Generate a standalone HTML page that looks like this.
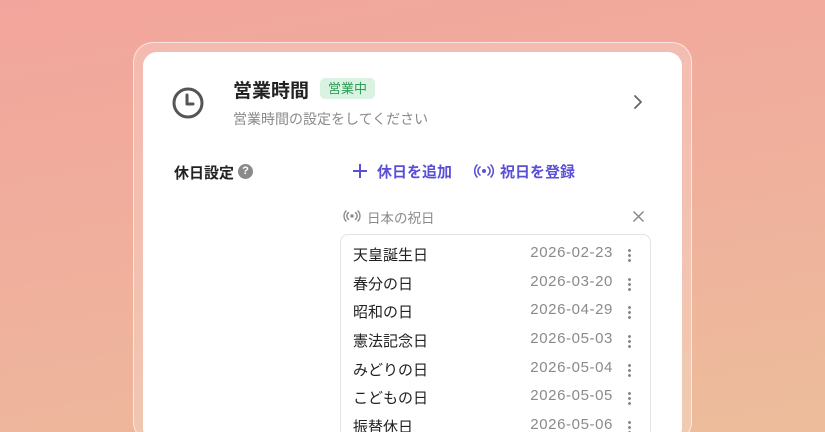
<!DOCTYPE html>
<html><head><meta charset="utf-8"><style>
*{margin:0;padding:0;box-sizing:border-box}
html,body{width:825px;height:432px;overflow:hidden}
body{position:relative;font-family:"Liberation Sans","Noto Sans CJK JP",sans-serif;
background:linear-gradient(170deg,#f2a59c 0%,#f0ae9c 45%,#ecbd9b 100%);}
.frame{position:absolute;left:133px;top:42px;width:559px;height:400px;border-radius:20px;background:rgba(255,255,255,0.22);border:1px solid rgba(255,255,255,0.6)}
.card{position:absolute;left:143px;top:52px;width:539px;height:390px;border-radius:14px;background:#fff}
.abs{position:absolute}
.title{left:233px;top:76px;font-size:19px;font-weight:bold;color:#222}
.badge{left:320px;top:78px;height:21px;padding:0 8px;background:#d9f2e1;color:#2e9e56;font-size:13px;line-height:21px;border-radius:5px}
.sub{left:233px;top:109px;font-size:14px;color:#8a8a8a}
.lbl{left:174px;top:162px;font-size:15px;font-weight:bold;color:#222}
.q{left:238px;top:164px;width:15px;height:15px;border-radius:50%;background:#8a8a8a;color:#fff;font-size:11px;font-weight:bold;text-align:center;line-height:15px}
.act{top:161px;font-size:15px;font-weight:bold;color:#5a4fd6}
.hd{left:343px;top:207px;font-size:13.5px;color:#8a8a8a}
.list{left:340px;top:234px;width:311px;height:220px;border:1px solid #e3e3e3;border-radius:8px}
.row{position:absolute;left:12px;width:290px;height:29px;font-size:15px;color:#222}
.row .d{position:absolute;right:30px;top:0;color:#8a8a8a;font-size:15px;letter-spacing:0.6px}
.row .k{position:absolute;right:12px;top:4px;width:3px;height:14px;background:radial-gradient(circle,#888 1.3px,transparent 1.6px) 0 0/3px 5px repeat-y}
</style></head><body>
<div class="frame"></div>
<div class="card"></div>
<svg class="abs" style="left:171px;top:86px" width="34" height="34" viewBox="0 0 34 34"><circle cx="17" cy="17" r="14" fill="none" stroke="#555" stroke-width="3"/><path d="M16 9v9h6" fill="none" stroke="#555" stroke-width="3" stroke-linecap="round" stroke-linejoin="round"/></svg>
<div class="abs title">営業時間</div>
<div class="abs badge">営業中</div>
<div class="abs sub">営業時間の設定をしてください</div>
<svg class="abs" style="left:632px;top:94px" width="12" height="16" viewBox="0 0 12 16"><path d="M3 2l6 6-6 6" fill="none" stroke="#666" stroke-width="1.8" stroke-linecap="round" stroke-linejoin="round"/></svg>
<div class="abs lbl">休日設定</div>
<div class="abs q">?</div>
<svg class="abs" style="left:352px;top:163px" width="16" height="16" viewBox="0 0 16 16"><path d="M8 1v14M1 8h14" stroke="#5a4fd6" stroke-width="2"/></svg>
<div class="abs act" style="left:377px">休日を追加</div>
<svg class="abs" style="left:474px;top:164px" width="20" height="14" viewBox="0 0 20 14"><circle cx="10" cy="7" r="2" fill="#5a4fd6"/><path d="M6 3a5 5 0 0 0 0 8M14 3a5 5 0 0 1 0 8M3 1a9 9 0 0 0 0 12M17 1a9 9 0 0 1 0 12" fill="none" stroke="#5a4fd6" stroke-width="1.6" stroke-linecap="round"/></svg>
<div class="abs act" style="left:500px">祝日を登録</div>
<svg class="abs" style="left:343px;top:210px" width="18" height="12" viewBox="0 0 20 14"><circle cx="10" cy="7" r="2" fill="#8a8a8a"/><path d="M6 3a5 5 0 0 0 0 8M14 3a5 5 0 0 1 0 8M3 1a9 9 0 0 0 0 12M17 1a9 9 0 0 1 0 12" fill="none" stroke="#8a8a8a" stroke-width="1.6" stroke-linecap="round"/></svg>
<div class="abs hd" style="left:367px">日本の祝日</div>
<svg class="abs" style="left:632px;top:210px" width="13" height="13" viewBox="0 0 13 13"><path d="M1.5 1.5l10 10M11.5 1.5l-10 10" stroke="#888" stroke-width="1.5"/></svg>
<div class="abs list">
<div class="row" style="top:9px">天皇誕生日<span class="d">2026-02-23</span><span class="k"></span></div>
<div class="row" style="top:38px">春分の日<span class="d">2026-03-20</span><span class="k"></span></div>
<div class="row" style="top:66px">昭和の日<span class="d">2026-04-29</span><span class="k"></span></div>
<div class="row" style="top:95px">憲法記念日<span class="d">2026-05-03</span><span class="k"></span></div>
<div class="row" style="top:124px">みどりの日<span class="d">2026-05-04</span><span class="k"></span></div>
<div class="row" style="top:152px">こどもの日<span class="d">2026-05-05</span><span class="k"></span></div>
<div class="row" style="top:181px">振替休日<span class="d">2026-05-06</span><span class="k"></span></div>
</div>
</body></html>
